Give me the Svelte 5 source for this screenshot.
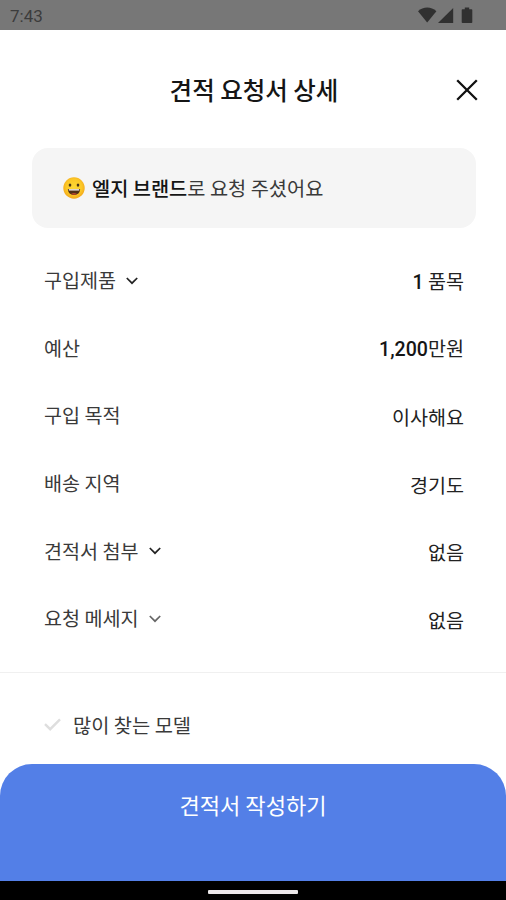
<script>
    const rows = [
        { label: "구입제품", number: "1", value: " 품목", arrow: true, tone: "dark" },
        { label: "예산", number: "1,200", value: "만원" },
        { label: "구입 목적", value: "이사해요" },
        { label: "배송 지역", value: "경기도" },
        { label: "견적서 첨부", value: "없음", arrow: true, tone: "dark" },
        { label: "요청 메세지", value: "없음", arrow: true, tone: "soft" },
    ];
</script>

<div class="screen">
    <div class="status-bar">
        <span class="clock">7:43</span>
        <svg class="status-icons" width="56" height="18" viewBox="0 0 56 18" fill="#303030">
            <path d="M0 4.2C5.2-.6 13.2-.6 18.4 4.2L9.2 15.4Z" />
            <path d="M20 16 35.2 1V16Z" />
            <path d="M44.5 2.2h2.3V.6h4.4v1.6h2.3q.8 0 .8.8v12.2q0 .8-.8.8h-9q-.8 0-.8-.8V3q0-.8.8-.8Z" />
        </svg>
    </div>

    <header class="header">
        <h1>견적 요청서 상세</h1>
        <button class="close" aria-label="닫기">
            <svg width="22" height="22" viewBox="0 0 22 22" fill="none" stroke="#111" stroke-width="2.3">
                <path d="M1.2 1.2 20.8 20.8M20.8 1.2 1.2 20.8" />
            </svg>
        </button>
    </header>

    <div class="notice">
        <svg width="22" height="22" viewBox="0 0 22 22">
            <defs>
                <radialGradient id="face" cx=".5" cy=".45" r=".55">
                    <stop offset="0" stop-color="#fdd835" />
                    <stop offset=".65" stop-color="#fcc826" />
                    <stop offset="1" stop-color="#f2a71d" />
                </radialGradient>
            </defs>
            <circle cx="11" cy="11" r="10.7" fill="url(#face)" />
            <ellipse cx="7" cy="8.1" rx="1.3" ry="1.6" fill="#4a3516" />
            <ellipse cx="15" cy="8.1" rx="1.3" ry="1.6" fill="#4a3516" />
            <path d="M4.9 12h12.2c0 3.8-2.6 6-6.1 6s-6.1-2.2-6.1-6Z" fill="#4f2f16" />
            <path d="M5.8 12.2h10.4v1.3H5.8Z" fill="#fff" />
            <path d="M8 16.9c1.7-1.2 4.3-1.2 6 0-1.6 1.2-4.4 1.2-6 0Z" fill="#b8482c" />
        </svg>
        <p><strong>엘지 브랜드</strong>로 요청 주셨어요</p>
    </div>

    <dl class="rows">
        {#each rows as row}
            <div class="row">
                <dt>
                    {row.label}
                    {#if row.arrow}
                        <svg class={row.tone} width="12" height="8" viewBox="0 0 12 8" fill="none" stroke-width="1.7">
                            <path d="M.8 1 6 6.2 11.2 1" />
                        </svg>
                    {/if}
                </dt>
                <dd>{#if row.number}<span class="number">{row.number}</span>{/if}{row.value}</dd>
            </div>
        {/each}
    </dl>

    <div class="models">
        <svg width="17" height="13" viewBox="0 0 17 13" fill="none" stroke="#dedede" stroke-width="2.4">
            <path d="M1 6.2 6.2 11.2 16 1.4" />
        </svg>
        <span>많이 찾는 모델</span>
    </div>

    <button class="submit">견적서 작성하기</button>

    <div class="nav-bar">
        <span class="handle"></span>
    </div>
</div>

<style>
    :global(body) {
        margin: 0;
        background: #fff;
    }

    .screen {
        display: flex;
        flex-direction: column;
        width: 506px;
        height: 900px;
        overflow: hidden;
        background: #fff;
        color: #222;
        font-family: "Noto Sans CJK KR", sans-serif;
        font-size: 19.6px;
    }

    .status-bar {
        flex: none;
        display: flex;
        justify-content: space-between;
        align-items: center;
        box-sizing: border-box;
        height: 30px;
        padding: 1px 32px 0 10px;
        background: #777;
    }

    .clock {
        color: #3c3c3c;
        font-family: Roboto, sans-serif;
        font-size: 17px;
    }

    .header {
        flex: none;
        display: grid;
        grid-template-columns: 1fr auto 1fr;
        align-items: center;
        height: 118px;
        padding: 2px 28px 0 30px;
        box-sizing: border-box;
    }

    h1 {
        grid-column: 2;
        margin: 0;
        color: #151515;
        font-size: 24.5px;
        font-weight: 500;
        line-height: 36px;
    }

    button {
        border: none;
        padding: 0;
        font-family: inherit;
        cursor: pointer;
    }

    .close {
        justify-self: end;
        display: flex;
        background: none;
    }

    .notice {
        flex: none;
        display: flex;
        align-items: center;
        gap: 7px;
        box-sizing: border-box;
        height: 80px;
        margin: 0 30px 0 32px;
        padding-left: 31px;
        border-radius: 16px;
        background: #f5f5f5;
    }

    .notice p {
        margin: 0;
        color: #3a3a3a;
        font-size: 19.75px;
        line-height: 28px;
    }

    .notice strong {
        color: #151515;
        font-weight: 500;
    }

    .rows {
        flex: none;
        display: grid;
        grid-auto-rows: 67.6px;
        margin: 0;
        padding: 19px 42px 0 44px;
        height: 445px;
        box-sizing: border-box;
        border-bottom: 1px solid #f0f0f0;
    }

    .row {
        display: flex;
        justify-content: space-between;
        align-items: center;
        line-height: 28px;
    }

    dt {
        display: flex;
        align-items: center;
        gap: 10px;
        padding-bottom: 1px;
        color: #3a3a3a;
    }

    dt .dark {
        margin-top: 1px;
        stroke: #222;
    }

    dt .soft {
        margin-top: 1px;
        stroke: #666;
    }

    dd {
        margin: 0;
        padding-top: 2px;
        white-space: pre;
    }

    .number {
        color: #151515;
        font-family: Roboto, sans-serif;
        font-weight: 500;
    }

    .models {
        flex: none;
        display: flex;
        align-items: center;
        gap: 12px;
        box-sizing: border-box;
        height: 91px;
        padding: 12px 44px 0;
        color: #3a3a3a;
        font-size: 19.8px;
    }

    .submit {
        flex: none;
        display: flex;
        justify-content: center;
        height: 117px;
        padding-top: 24px;
        border-radius: 32px 32px 0 0;
        background: #537fe7;
        color: #fff;
        font-size: 22.1px;
        line-height: 32px;
    }

    .nav-bar {
        flex: 1;
        display: flex;
        justify-content: center;
        align-items: center;
        background: #000;
    }

    .handle {
        width: 90px;
        height: 4px;
        margin-top: 2px;
        border-radius: 1px;
        background: #ece8ea;
    }
</style>
